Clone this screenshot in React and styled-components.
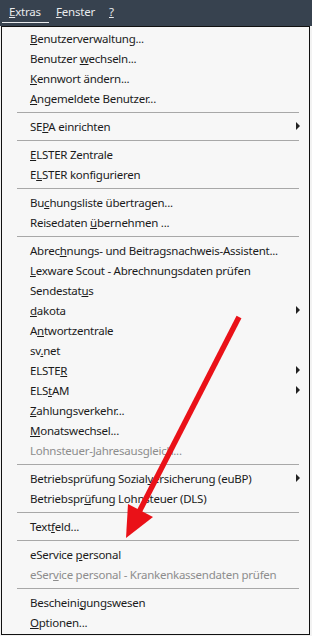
import React from "react";
import styled, { createGlobalStyle } from "styled-components";

const Global = createGlobalStyle`
  html, body {
    margin: 0;
    padding: 0;
    background: #f2f2f2;
  }
  body {
    width: 312px;
    height: 636px;
    overflow: hidden;
    font-family: "Noto Sans", "Open Sans", sans-serif;
  }
`;

const Screen = styled.div`
  position: relative;
  width: 312px;
  height: 636px;
  display: flex;
  flex-direction: column;
`;

const MenuBar = styled.div`
  height: 26px;
  background: #37424f;
  display: flex;
  align-items: flex-start;
  padding-left: 2px;
`;

const BarItem = styled.div`
  height: 23px;
  padding: ${(p) => (p.$active ? "0 8px 0 7px" : "0 7px")};
  display: flex;
  align-items: center;
  color: #e8eaed;
  font-size: 11.5px;
  letter-spacing: -0.2px;
  border-bottom: 1px solid ${(p) => (p.$active ? "#e8eaed" : "transparent")};
  box-sizing: border-box;
`;

const Panel = styled.div`
  margin-left: 1px;
  width: 309px;
  height: 609px;
  box-sizing: border-box;
  border: 1px solid #111;
  background: #f7f7f7;
  padding: 1px 0 3px;
  display: flex;
  flex-direction: column;
`;

const Item = styled.div`
  height: 20px;
  flex: none;
  display: flex;
  align-items: center;
  padding-left: 28px;
  padding-right: 9px;
  font-size: 11.5px;
  letter-spacing: -0.25px;
  color: ${(p) => (p.$disabled ? "#8d8d8d" : "#1b1b1b")};
  white-space: nowrap;
`;

const Label = styled.span`
  flex: 1;
`;

const Arrow = styled.span`
  width: 0;
  height: 0;
  border-top: 4px solid transparent;
  border-bottom: 4px solid transparent;
  border-left: 4px solid #222;
`;

const Separator = styled.div`
  height: 8px;
  flex: none;
  display: flex;
  align-items: center;
  padding: 0 10px 0 15px;

  &::after {
    content: "";
    flex: 1;
    height: 1px;
    background: #a8a8a8;
  }
`;

const Overlay = styled.svg`
  position: absolute;
  left: 0;
  top: 0;
  pointer-events: none;
`;

const groups = [
  [
    ["", "B", "enutzerverwaltung..."],
    ["Benutzer ", "w", "echseln..."],
    ["", "K", "ennwort ändern..."],
    ["", "A", "ngemeldete Benutzer..."],
  ],
  [["SE", "P", "A einrichten", { sub: true }]],
  [
    ["", "E", "LSTER Zentrale"],
    ["E", "L", "STER konfigurieren"],
  ],
  [
    ["Bu", "c", "hungsliste übertragen..."],
    ["Reisedaten ", "ü", "bernehmen ..."],
  ],
  [
    ["Abrec", "h", "nungs- und Beitragsnachweis-Assistent..."],
    ["", "L", "exware Scout - Abrechnungsdaten prüfen"],
    ["Sendestat", "u", "s"],
    ["", "d", "akota", { sub: true }],
    ["A", "n", "twortzentrale"],
    ["sv", ".", "net"],
    ["ELSTE", "R", "", { sub: true }],
    ["ELS", "t", "AM", { sub: true }],
    ["", "Z", "ahlungsverkehr..."],
    ["", "M", "onatswechsel..."],
    ["Lohnsteuer-", "J", "ahresausgleich...", { disabled: true }],
  ],
  [
    ["Betriebsprüfung Sozial", "v", "ersicherung (euBP)", { sub: true }],
    ["Betriebspr", "ü", "fung Lohnsteuer (DLS)"],
  ],
  [["Text", "f", "eld..."]],
  [
    ["eService ", "p", "ersonal"],
    ["eSer", "v", "ice personal - Krankenkassendaten prüfen", { disabled: true }],
  ],
  [
    ["Bescheini", "g", "ungswesen"],
    ["", "O", "ptionen..."],
  ],
];

const App = () => (
  <Screen>
    <Global />
    <MenuBar>
      <BarItem $active>
        <span>
          <u>E</u>xtras
        </span>
      </BarItem>
      <BarItem>
        <span>
          <u>F</u>enster
        </span>
      </BarItem>
      <BarItem>
        <span>
          <u>?</u>
        </span>
      </BarItem>
    </MenuBar>
    <Panel>
      {groups.map((group, gi) => (
        <React.Fragment key={gi}>
          {gi > 0 && <Separator />}
          {group.map(([pre, key, post, opts = {}], i) => (
            <Item key={i} $disabled={opts.disabled}>
              <Label>
                {pre}
                <u>{key}</u>
                {post}
              </Label>
              {opts.sub && <Arrow />}
            </Item>
          ))}
        </React.Fragment>
      ))}
    </Panel>
    <Overlay width="312" height="636" viewBox="0 0 312 636">
      <line x1="239" y1="317" x2="138" y2="514" stroke="#ea1118" strokeWidth="5.5" />
      <polygon points="126,538 128,504 153,517" fill="#ea1118" />
    </Overlay>
  </Screen>
);

export default App;
